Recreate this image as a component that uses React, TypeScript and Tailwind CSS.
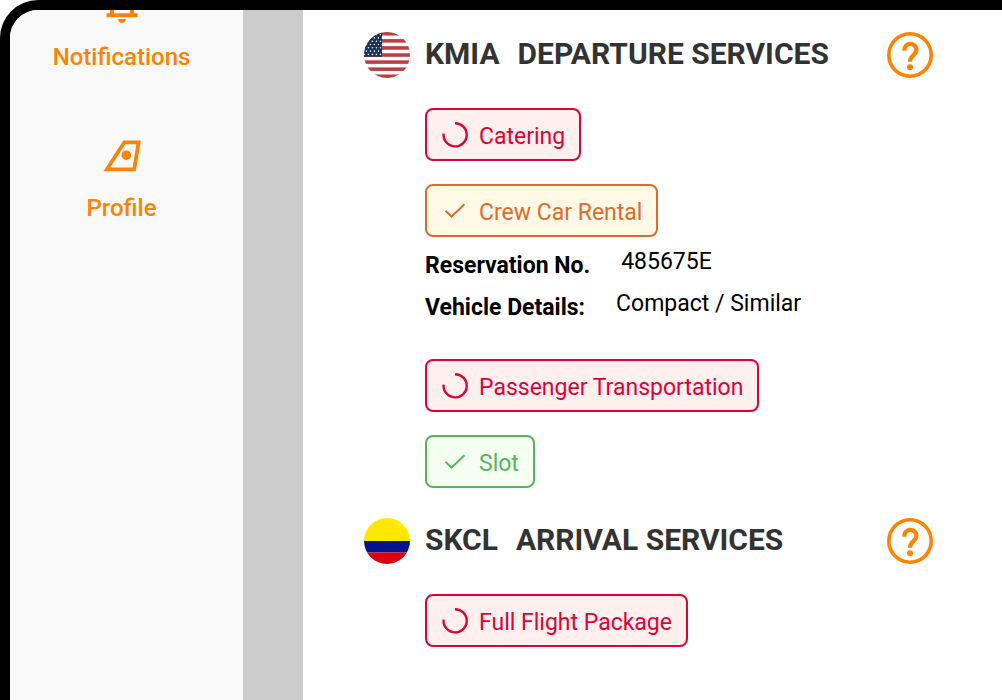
import React from "react";

type Status = "pending" | "review" | "done";

const chipStyles: Record<Status, string> = {
  pending: "border-[#dc0338] bg-[#ffefee] text-[#dc0338]",
  review: "border-[#dd6b2f] bg-[#fff9e6] text-[#dd6b2f]",
  done: "border-[#58b55c] bg-[#f4fff2] text-[#58b55c]",
};

function StatusIcon({ status }: { status: Status }) {
  return (
    <svg className="size-7 shrink-0" viewBox="0 0 28 28" fill="none" stroke="currentColor" aria-hidden="true">
      {status === "pending" ? (
        <path d="M14 2.2A11.6 11.6 0 1 1 2.6 12.6" strokeWidth="2.4" />
      ) : (
        <path d="M4.5 13.800l6 5.800L23.500 7.200" strokeWidth="2" />
      )}
    </svg>
  );
}

function ServiceChip({ status, children }: { status: Status; children: React.ReactNode }) {
  return (
    <button
      type="button"
      className={`flex h-[53px] items-center gap-2.5 rounded-lg border-2 px-3.5 text-[23px] leading-7 whitespace-nowrap ${chipStyles[status]}`}
    >
      <StatusIcon status={status} />
      <span className="pt-1">{children}</span>
    </button>
  );
}

const starRows = [0, 1, 2, 3, 4, 5, 6];

function UsFlag() {
  return (
    <svg className="size-[46px] shrink-0" viewBox="0 0 46 46" role="img" aria-label="United States">
      <clipPath id="us-round">
        <circle cx="23" cy="23" r="23" />
      </clipPath>
      <g clipPath="url(#us-round)">
        <rect width="46" height="46" fill="#fff" />
        {[0, 1, 2, 3, 4, 5, 6].map((i) => (
          <rect key={i} y={i * 7.08} width="46" height="3.54" fill="#bd3d44" />
        ))}
        <rect width="18" height="24.8" fill="#192f5d" />
        {starRows.map((r) =>
          [0, 1, 2, 3, 4].map((c) => (
            <circle key={`${r}-${c}`} cx={c * 4 + (r % 2 ? 2.4 : 0.4)} cy={2.6 + r * 3.3} r="0.8" fill="#fff" />
          )),
        )}
      </g>
    </svg>
  );
}

function ColombiaFlag() {
  return (
    <svg className="size-[46px] shrink-0" viewBox="0 0 46 46" role="img" aria-label="Colombia">
      <clipPath id="co-round">
        <circle cx="23" cy="23" r="23" />
      </clipPath>
      <g clipPath="url(#co-round)">
        <rect width="46" height="23" fill="#ffe800" />
        <rect y="23" width="46" height="11.5" fill="#00148e" />
        <rect y="34.5" width="46" height="11.5" fill="#da0010" />
      </g>
    </svg>
  );
}

function HelpButton({ label }: { label: string }) {
  return (
    <button type="button" aria-label={label} className="size-[46px] shrink-0 text-[#ff8201]">
      <svg viewBox="0 0 46 46" fill="none" stroke="currentColor" aria-hidden="true">
        <circle cx="23" cy="23" r="21.2" strokeWidth="3.6" />
        <path d="M17.400 18.800v-1a6 6 0 0 1 12 0c0 2.400-1.400 3.900-3.100 5.500-2 1.800-3.300 3-3.300 6.400" strokeWidth="4.200" />
        <circle cx="23" cy="35.300" r="3" fill="currentColor" stroke="none" />
      </svg>
    </button>
  );
}

function ServicesHeading({ flag, code, title }: { flag: React.ReactNode; code: string; title: string }) {
  return (
    <div className="flex items-center gap-[15px]">
      {flag}
      <h2 className="flex flex-1 gap-[18px] pb-0.5 text-[30px] leading-9 font-bold whitespace-nowrap text-[#333]">
        <span>{code}</span>
        <span>{title}</span>
      </h2>
      <HelpButton label={`Help with ${title.toLowerCase()}`} />
    </div>
  );
}

function Detail({ label, value }: { label: string; value: string }) {
  return (
    <div className="flex h-[42px] items-center gap-[31px] text-[23px] whitespace-nowrap text-black">
      <dt className="font-bold">{label}</dt>
      <dd className="pb-2">{value}</dd>
    </div>
  );
}

function NotificationsIcon() {
  return (
    <svg className="h-10 w-9" viewBox="0 0 36 40" fill="none" stroke="currentColor" aria-hidden="true">
      <path d="M8 31V15a10 10 0 0 1 20 0v16" strokeWidth="4" />
      <path d="M2.500 32.200h31" strokeWidth="4" />
      <path d="M14 36h8c-.5 2.400-2 4-4 4s-3.500-1.600-4-4Z" fill="currentColor" stroke="none" />
    </svg>
  );
}

function ProfileIcon() {
  return (
    <svg className="h-8 w-[38px]" viewBox="0 0 38 32" fill="none" stroke="currentColor" aria-hidden="true">
      <path d="M21.300 2.300H35.600L31.200 29.300H3.800Z" strokeWidth="3.700" />
      <circle cx="23.300" cy="15.200" r="4.800" fill="currentColor" stroke="none" />
    </svg>
  );
}

export default function App() {
  return (
    <div className="bg-white font-['Roboto',sans-serif]">
      <div className="flex min-h-screen overflow-hidden rounded-tl-[38px] border-t-10 border-l-10 border-black bg-white">
        <nav className="w-[233px] shrink-0 bg-[#f9f9f9] pr-2.5 text-2xl font-medium text-[#ff8201]">
          <a href="#notifications" className="-mt-[27px] flex flex-col items-center gap-[18px]">
            <NotificationsIcon />
            <span>Notifications</span>
          </a>
          <a href="#profile" className="mt-[67px] flex flex-col items-center gap-5">
            <ProfileIcon />
            <span>Profile</span>
          </a>
        </nav>
        <div className="w-[60px] shrink-0 bg-[#ccc]" />
        <main className="min-w-0 flex-1 pt-[22px] pr-[69px] pb-10 pl-[61px]">
          <section>
            <ServicesHeading flag={<UsFlag />} code="KMIA" title="DEPARTURE SERVICES" />
            <div className="mt-[30px] flex flex-col items-start pl-[61px]">
              <div className="flex flex-col items-start gap-[23px]">
                <ServiceChip status="pending">Catering</ServiceChip>
                <ServiceChip status="review">Crew Car Rental</ServiceChip>
              </div>
              <dl className="mt-2">
                <Detail label="Reservation No." value="485675E" />
                <Detail label="Vehicle Details:" value="Compact / Similar" />
              </dl>
              <div className="mt-[30px] flex flex-col items-start gap-[23px]">
                <ServiceChip status="pending">Passenger Transportation</ServiceChip>
                <ServiceChip status="done">Slot</ServiceChip>
              </div>
            </div>
          </section>
          <section className="mt-[30px]">
            <ServicesHeading flag={<ColombiaFlag />} code="SKCL" title="ARRIVAL SERVICES" />
            <div className="mt-[30px] flex flex-col items-start pl-[61px]">
              <ServiceChip status="pending">Full Flight Package</ServiceChip>
            </div>
          </section>
        </main>
      </div>
    </div>
  );
}
